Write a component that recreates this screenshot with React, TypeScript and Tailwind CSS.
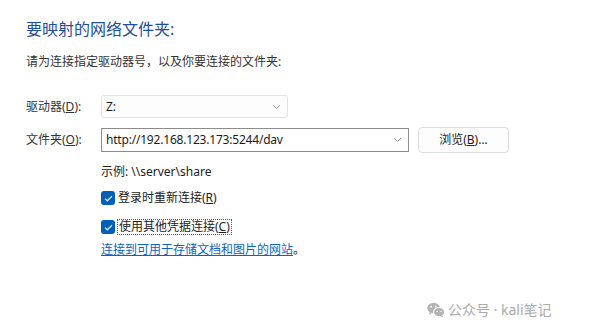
import React from "react";

const font = { fontFamily: '"Noto Sans", "Noto Sans CJK SC", sans-serif' };

function Chevron() {
  return (
    <svg width="9" height="6" viewBox="0 0 9 6" fill="none">
      <path d="M1 1l3.5 3.5L8 1" stroke="#9a9a9a" strokeWidth="1" />
    </svg>
  );
}

function Check() {
  return (
    <span className="w-[14px] h-[14px] rounded-[3px] bg-[#005fb8] flex items-center justify-center shrink-0">
      <svg width="9" height="7" viewBox="0 0 9 7" fill="none">
        <path d="M1 3.6l2.3 2.2L8 1.2" stroke="#dfeaf7" strokeWidth="1.2" />
      </svg>
    </span>
  );
}

function WeChat() {
  return (
    <svg width="18" height="16" viewBox="0 0 17 15">
      <ellipse cx="6.2" cy="5.6" rx="6" ry="5" fill="#b4b4b4" />
      <path d="M2.5 9.5l-0.6 2.4 2.6-1.4z" fill="#b4b4b4" />
      <ellipse cx="11.4" cy="9.6" rx="5.2" ry="4.4" fill="#b4b4b4" stroke="#fff" strokeWidth="1" />
      <path d="M14.6 12.6l0.6 2-2.4-1z" fill="#b4b4b4" />
      <circle cx="4" cy="4.4" r="0.8" fill="#fff" />
      <circle cx="8.2" cy="4.4" r="0.8" fill="#fff" />
      <circle cx="9.6" cy="8.8" r="0.7" fill="#fff" />
      <circle cx="13.2" cy="8.8" r="0.7" fill="#fff" />
    </svg>
  );
}

export default function App() {
  return (
    <div className="w-[600px] h-[334px] bg-white relative overflow-hidden text-[#1a1a1a]" style={font}>
      <div className="flex flex-col pl-[26px]">
        <div className="mt-[19px] text-[16px] leading-[20px] text-[#1f4e9e]">要映射的网络文件夹:</div>
        <div className="mt-[15px] text-[12px] leading-[16px] text-[#333]">
          请为连接指定驱动器号，以及你要连接的文件夹:
        </div>

        <div className="mt-[25px] flex items-center h-[23px]">
          <div className="w-[75px] text-[12px] text-[#333]">
            驱动器(<span className="underline">D</span>):
          </div>
          <div className="w-[187px] h-[23px] border border-[#e3e3e3] bg-[#fdfdfd] rounded-[3px] flex items-center justify-between pl-[4px] pr-[6px] text-[12px]">
            <span>Z:</span>
            <Chevron />
          </div>
        </div>

        <div className="mt-[9px] flex items-center h-[25px]">
          <div className="w-[75px] text-[12px] text-[#333]">
            文件夹(<span className="underline">O</span>):
          </div>
          <div className="w-[308px] h-[24px] border border-[#8c8c8c] bg-white flex items-center justify-between pl-[4px] pr-[6px] text-[12px] tracking-[-0.2px]">
            <span>http://192.168.123.173:5244/dav</span>
            <Chevron />
          </div>
          <div className="ml-[9px] w-[91px] h-[26px] border border-[#dcdcdc] bg-[#fdfdfd] rounded-[4px] flex items-center justify-center text-[12px] text-[#222]">
            浏览(<span className="underline">B</span>)...
          </div>
        </div>

        <div className="ml-[75px] flex flex-col text-[12px] leading-[16px] text-[#222]">
          <div className="mt-[12px]">示例: \\server\share</div>
          <div className="mt-[10px] flex items-center h-[16px]">
            <Check />
            <span className="ml-[3px]">
              登录时重新连接(<span className="underline">R</span>)
            </span>
          </div>
          <div className="mt-[13px] flex items-center h-[16px]">
            <Check />
            <span className="ml-[2px] border border-dotted border-[#555] px-[1px] leading-[14px]">
              使用其他凭据连接(<span className="underline">C</span>)
            </span>
          </div>
          <div className="mt-[7px]">
            <span className="text-[#0a64c2] underline">连接到可用于存储文档和图片的网站</span>
            <span>。</span>
          </div>
        </div>
      </div>

      <div className="absolute left-[427px] top-[299px] flex items-center gap-[3px] text-[14px] text-[#ababab]">
        <WeChat />
        <span>公众号 · kali笔记</span>
      </div>
    </div>
  );
}
